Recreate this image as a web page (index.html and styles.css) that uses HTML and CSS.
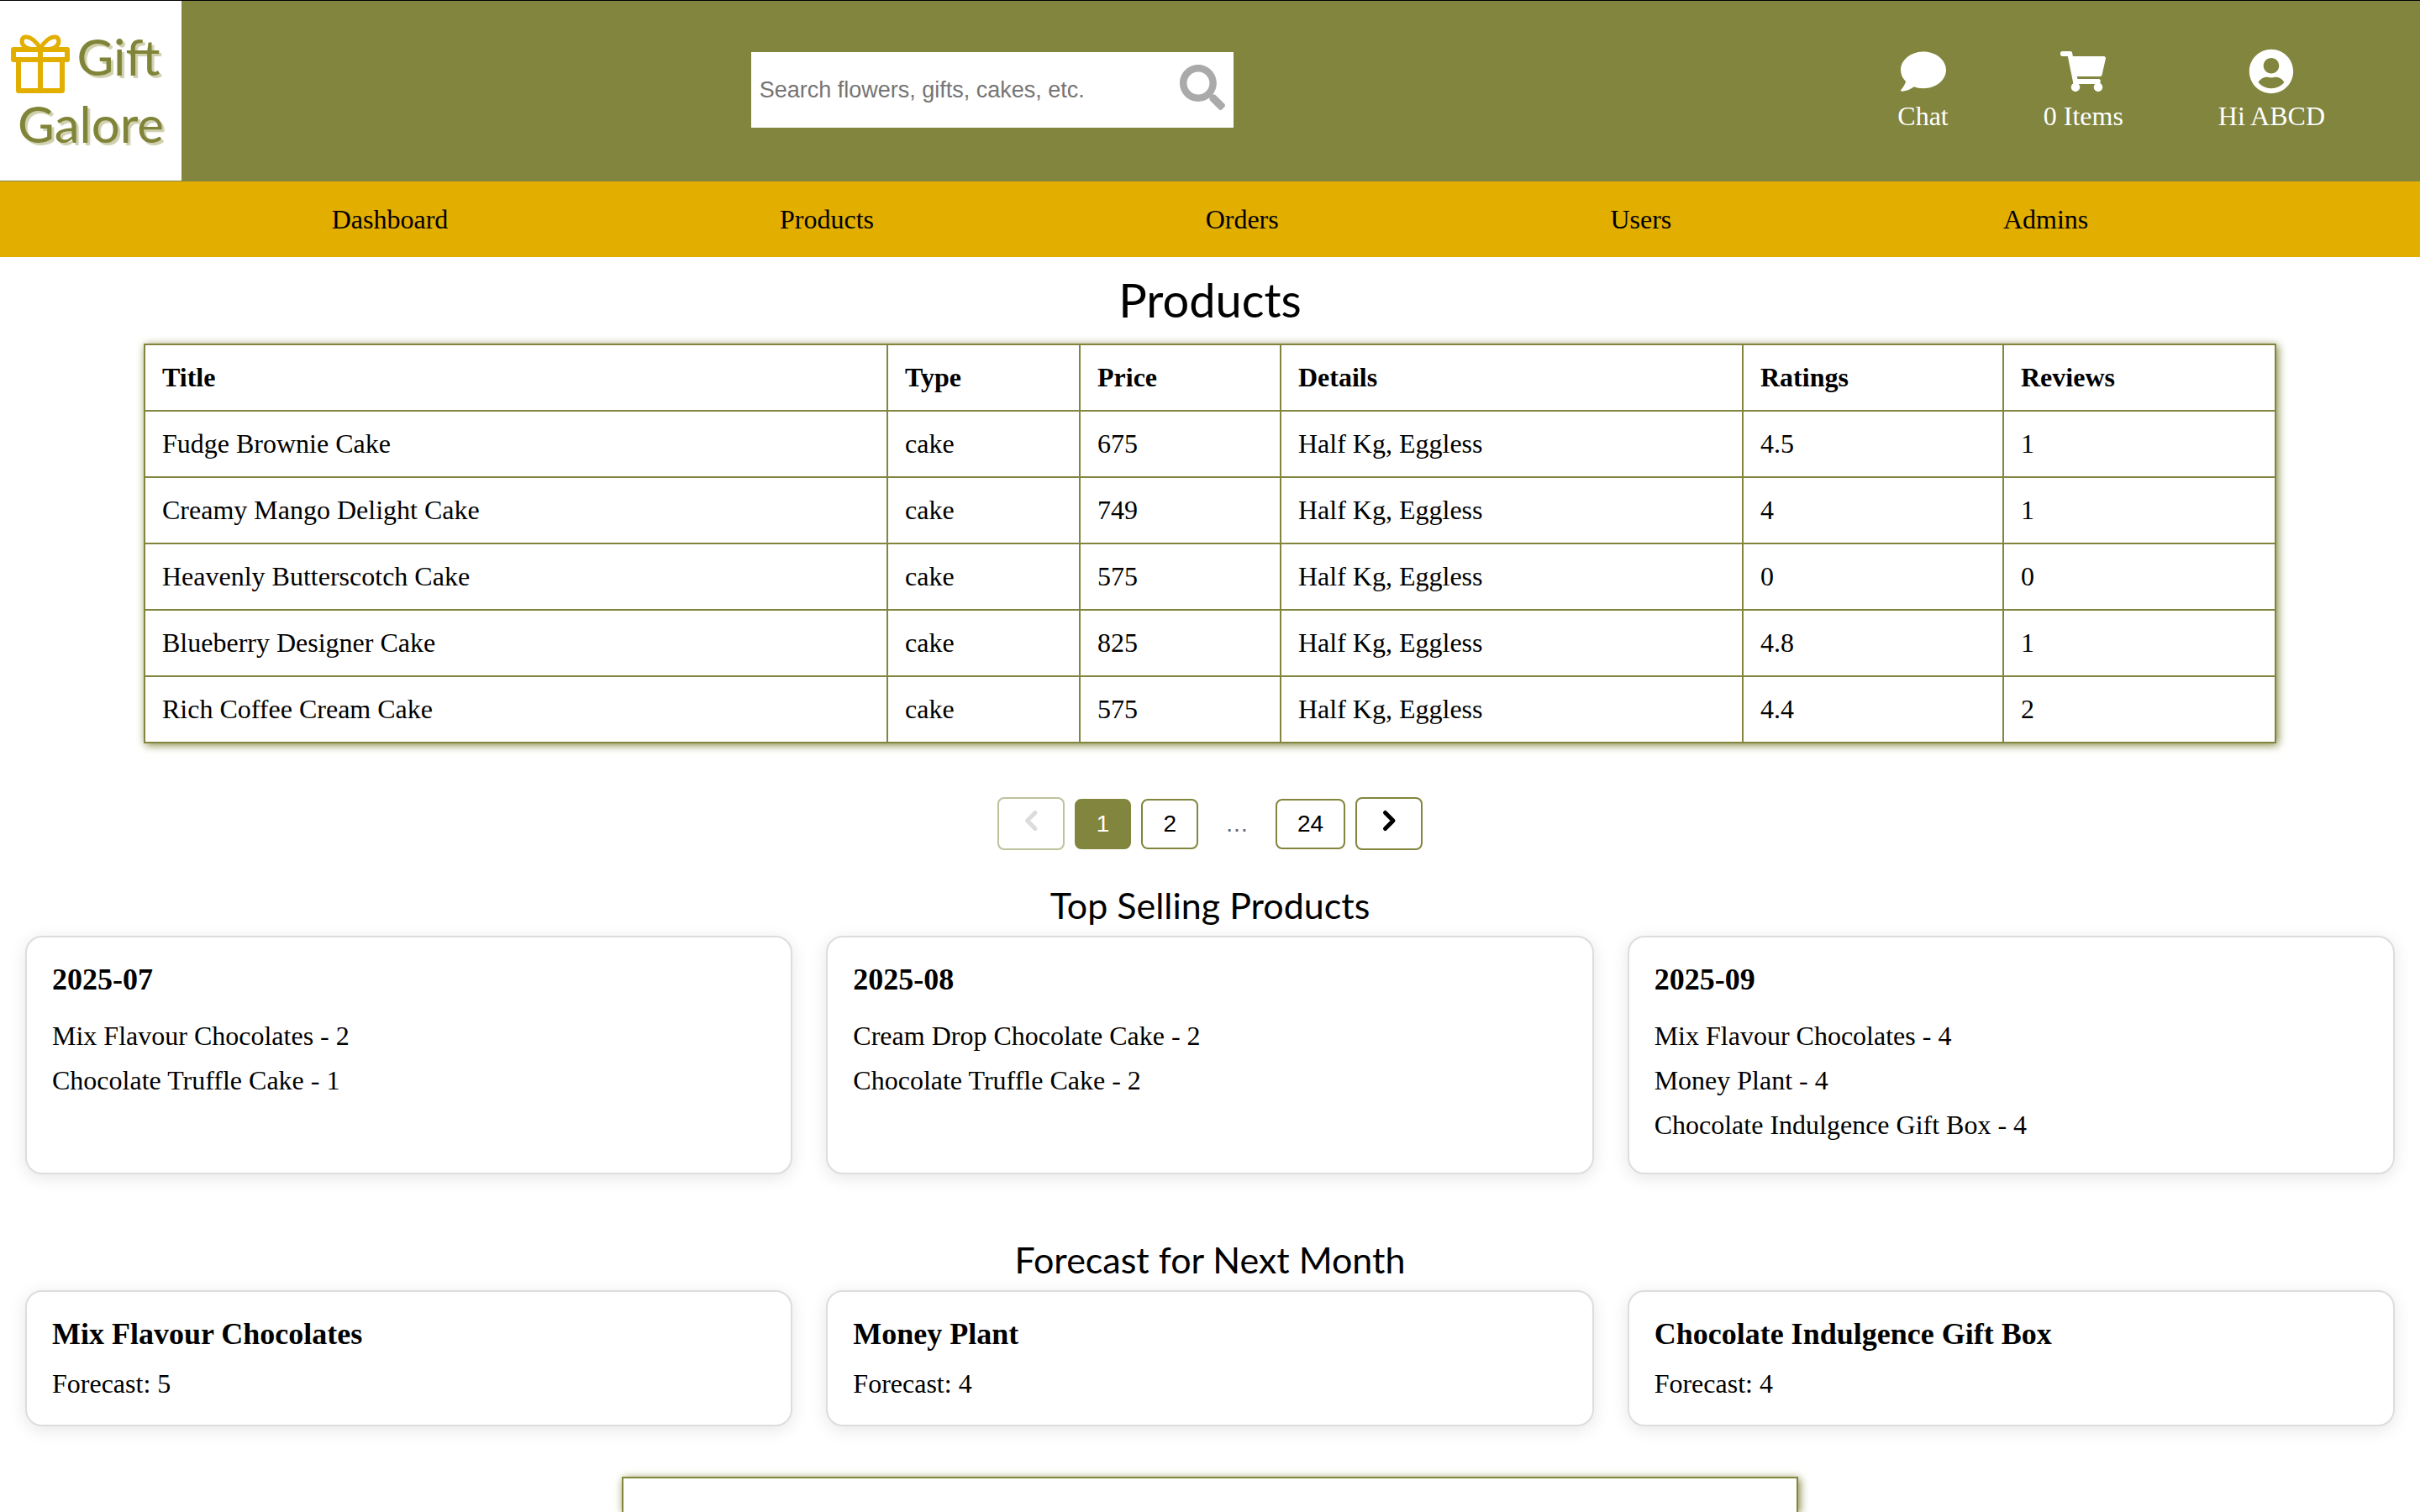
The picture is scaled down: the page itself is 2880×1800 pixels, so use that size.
FILE: index.html
```html
<!DOCTYPE html>
<html lang="en">
<head>
<meta charset="utf-8">
<title>Gift Galore - Products</title>
<link rel="stylesheet" href="styles.css">
</head>
<body>
<header class="header">
  <a class="logo" href="#">
    <span class="logo-row">
      <svg class="logo-gift" viewBox="0 0 70 70" fill="none" stroke="currentColor" stroke-width="6" stroke-linejoin="round" aria-hidden="true">
        <path d="M3 18H67V30H3ZM9 30V67H61V30M35 18V67"/>
        <path stroke-width="5" d="M35 17C31 9 23 2 17 3C12 4 12 11 16 14C19 17 26 18 33 18M35 17C39 9 47 2 53 3C58 4 58 11 54 14C51 17 44 18 37 18"/>
      </svg>
      <span>Gift</span>
    </span>
    <span>Galore</span>
  </a>
  <form class="search" role="search">
    <input class="search-input" type="search" aria-label="Search" placeholder="Search flowers, gifts, cakes, etc.">
    <button class="search-button" type="button" aria-label="Search">
      <svg class="icon" viewBox="0 0 512 512" fill="currentColor"><path d="M505 442.700L405.300 343c-4.500-4.500-10.600-7-17-7H372c27.600-35.300 44-79.700 44-128C416 93.100 322.900 0 208 0S0 93.100 0 208s93.100 208 208 208c48.300 0 92.700-16.400 128-44v16.300c0 6.400 2.500 12.500 7 17l99.700 99.700c9.400 9.400 24.600 9.400 33.900 0l28.300-28.300c9.400-9.400 9.400-24.600.1-34zM208 336c-70.700 0-128-57.200-128-128 0-70.700 57.200-128 128-128 70.700 0 128 57.200 128 128 0 70.700-57.200 128-128 128z"/></svg>
    </button>
  </form>
  <div class="actions">
    <a class="action" href="#">
      <svg class="icon" viewBox="0 0 512 512" fill="currentColor" aria-hidden="true"><path d="M256 32C114.600 32 0 125.100 0 240c0 49.600 21.400 95 57 130.700C44.500 421.100 2.700 466 2.200 466.500c-2.200 2.300-2.800 5.700-1.500 8.700S4.800 480 8 480c66.300 0 116-31.800 140.600-51.400 32.700 12.300 69 19.400 107.400 19.400 141.400 0 256-93.100 256-208S397.400 32 256 32z"/></svg>
      <span>Chat</span>
    </a>
    <a class="action" href="#">
      <svg class="icon" viewBox="0 0 576 512" fill="currentColor" aria-hidden="true"><path d="M528.120 301.319l47.273-208C578.806 78.301 567.391 64 551.990 64H159.208l-9.166-44.810C147.758 8.021 137.930 0 126.529 0H24C10.745 0 0 10.745 0 24v16c0 13.255 10.745 24 24 24h69.883l70.248 343.435C147.325 417.100 136 435.222 136 456c0 30.928 25.072 56 56 56s56-25.072 56-56c0-15.674-6.447-29.835-16.824-40h209.647C430.447 426.165 424 440.326 424 456c0 30.928 25.072 56 56 56s56-25.072 56-56c0-22.172-12.888-41.332-31.579-50.405l5.517-24.276c3.413-15.018-8.002-29.319-23.403-29.319H218.117l-6.545-32h293.145c11.206 0 20.920-7.754 23.403-18.681z"/></svg>
      <span>0 Items</span>
    </a>
    <a class="action" href="#">
      <svg class="icon" viewBox="0 0 496 512" fill="currentColor" aria-hidden="true"><path d="M248 8C111 8 0 119 0 256s111 248 248 248 248-111 248-248S385 8 248 8zm0 96c48.600 0 88 39.400 88 88s-39.400 88-88 88-88-39.400-88-88 39.400-88 88-88zm0 344c-58.700 0-111.300-26.600-146.500-68.200 18.800-35.400 55.600-59.800 98.500-59.800 2.400 0 4.800.4 7.100 1.100 13 4.200 26.600 6.900 40.900 6.900 14.300 0 28-2.700 40.900-6.900 2.300-.7 4.700-1.100 7.100-1.100 42.900 0 79.700 24.400 98.500 59.800C359.300 421.400 306.700 448 248 448z"/></svg>
      <span>Hi ABCD</span>
    </a>
  </div>
</header>
<nav class="nav">
  <a href="#">Dashboard</a>
  <a href="#">Products</a>
  <a href="#">Orders</a>
  <a href="#">Users</a>
  <a href="#">Admins</a>
</nav>
<main class="main">
  <h1 class="title">Products</h1>
  <table class="products">
    <colgroup>
      <col class="col-title"><col class="col-type"><col class="col-price"><col class="col-details"><col class="col-ratings"><col>
    </colgroup>
    <thead>
      <tr><th>Title</th><th>Type</th><th>Price</th><th>Details</th><th>Ratings</th><th>Reviews</th></tr>
    </thead>
    <tbody>
      <tr><td>Fudge Brownie Cake</td><td>cake</td><td>675</td><td>Half Kg, Eggless</td><td>4.5</td><td>1</td></tr>
      <tr><td>Creamy Mango Delight Cake</td><td>cake</td><td>749</td><td>Half Kg, Eggless</td><td>4</td><td>1</td></tr>
      <tr><td>Heavenly Butterscotch Cake</td><td>cake</td><td>575</td><td>Half Kg, Eggless</td><td>0</td><td>0</td></tr>
      <tr><td>Blueberry Designer Cake</td><td>cake</td><td>825</td><td>Half Kg, Eggless</td><td>4.8</td><td>1</td></tr>
      <tr><td>Rich Coffee Cream Cake</td><td>cake</td><td>575</td><td>Half Kg, Eggless</td><td>4.4</td><td>2</td></tr>
    </tbody>
  </table>
  <div class="pagination">
    <button class="page page-arrow" type="button" aria-label="Previous page" disabled>
      <svg class="chevron" viewBox="0 0 28 28"><path d="M19 4.500L9.500 14L19 23.500"/></svg>
    </button>
    <button class="page page-current" type="button">1</button>
    <button class="page" type="button">2</button>
    <span class="page-dots">…</span>
    <button class="page" type="button">24</button>
    <button class="page page-arrow" type="button" aria-label="Next page">
      <svg class="chevron" viewBox="0 0 28 28"><path d="M9.500 4.500L19 14L9.500 23.500"/></svg>
    </button>
  </div>
  <section class="section">
    <h2 class="subtitle">Top Selling Products</h2>
    <div class="cards">
      <article class="card">
        <h3>2025-07</h3>
        <ul><li>Mix Flavour Chocolates - 2</li><li>Chocolate Truffle Cake - 1</li></ul>
      </article>
      <article class="card">
        <h3>2025-08</h3>
        <ul><li>Cream Drop Chocolate Cake - 2</li><li>Chocolate Truffle Cake - 2</li></ul>
      </article>
      <article class="card">
        <h3>2025-09</h3>
        <ul><li>Mix Flavour Chocolates - 4</li><li>Money Plant - 4</li><li>Chocolate Indulgence Gift Box - 4</li></ul>
      </article>
    </div>
  </section>
  <section class="section">
    <h2 class="subtitle">Forecast for Next Month</h2>
    <div class="cards">
      <article class="card"><h3>Mix Flavour Chocolates</h3><p>Forecast: 5</p></article>
      <article class="card"><h3>Money Plant</h3><p>Forecast: 4</p></article>
      <article class="card"><h3>Chocolate Indulgence Gift Box</h3><p>Forecast: 4</p></article>
    </div>
  </section>
  <section class="chart"></section>
</main>
</body>
</html>
```
FILE: styles.css
```css
:root {
  --olive: #82853d;
  --gold: #e2ae00;
  --script: Lato, sans-serif;
}

* { box-sizing: border-box; margin: 0; padding: 0; }

body {
  display: flex;
  flex-direction: column;
  min-height: 100vh;
  border-top: 1px solid #000;
  background: #fff;
  color: #000;
  font: 32px/37px "Liberation Serif", "Times New Roman", serif;
}

a { color: inherit; text-decoration: none; }
button { font: inherit; cursor: pointer; }
ul { list-style: none; }
.icon { display: block; width: 54px; height: 54px; }

/* Header */
.header {
  display: flex;
  align-items: center;
  background: var(--olive);
  padding-bottom: 1px;
}

.logo {
  display: flex;
  flex-direction: column;
  align-items: center;
  width: 216px;
  height: 214px;
  padding-top: 30px;
  background: #fff;
  color: #808438;
  font: 60px/73px var(--script);
  text-shadow: 3px 3px 1px #cfcfae;
}
.logo-row { display: flex; gap: 8px; padding-right: 12px; }
.logo-gift { width: 70px; height: 70px; margin-top: 10px; color: var(--gold); }

.search {
  display: flex;
  align-items: center;
  width: 574px;
  height: 90px;
  margin: 0 auto 2px;
  padding: 0 10px;
  background: #fff;
}
.search-input {
  flex: 1;
  min-width: 0;
  border: 0;
  outline: 0;
  background: none;
  font: 27px/32px "Liberation Sans", Arial, sans-serif;
}
.search-input::placeholder { color: #757575; opacity: 1; }
.search-button { padding-bottom: 6px; border: 0; background: none; color: #aaa; }

.actions { display: flex; gap: 113px; padding: 0 113px 2px; color: #fff; }
.action { display: flex; flex-direction: column; align-items: center; gap: 8px; }

.nav {
  display: flex;
  justify-content: space-evenly;
  align-items: center;
  height: 90px;
  background: var(--gold);
}

/* Products table */
.main { flex: 1; display: flex; flex-direction: column; }

.title, .subtitle { font-family: var(--script); font-weight: 400; text-align: center; }
.title { padding: 11px 0 12px; font-size: 56px; line-height: 80px; }
.subtitle { padding-bottom: 8px; font-size: 43px; line-height: 56px; }

.products {
  width: calc(100% - 342px);
  margin: 0 auto;
  border-collapse: collapse;
  table-layout: fixed;
  box-shadow: 2px 2px 10px var(--olive);
}
.products th, .products td { padding: 20px; border: 2px solid var(--olive); text-align: left; }
.col-title { width: 884px; }
.col-type { width: 229px; }
.col-price { width: 239px; }
.col-details { width: 550px; }
.col-ratings { width: 310px; }

/* Pagination */
.pagination {
  display: flex;
  justify-content: center;
  align-items: center;
  gap: 12px;
  margin: 64px 0 38px;
  font: 28px/32px "Liberation Sans", Arial, sans-serif;
}
.page {
  padding: 12px 24px;
  border: 2px solid var(--olive);
  border-radius: 8px;
  background: #fff;
  color: #000;
}
.page-current { background: var(--olive); color: #fff; }
.page-arrow { padding-bottom: 19px; }
.page-arrow:disabled { color: #bbb; opacity: 0.5; }
.page-dots { padding: 0 20px; color: #666; }
.chevron {
  display: block;
  width: 28px;
  height: 28px;
  fill: none;
  stroke: currentColor;
  stroke-width: 5;
  stroke-linecap: round;
  stroke-linejoin: round;
}

/* Cards */
.section { padding: 0 30px; margin-bottom: 60px; }
.section + .section { margin-top: 14px; }
.cards { display: grid; grid-template-columns: repeat(3, 1fr); gap: 40px; }
.card {
  padding: 30px;
  border: 2px solid #ddd;
  border-radius: 20px;
  background: #fff;
  box-shadow: 0 4px 20px rgba(0, 0, 0, 0.1);
}
.card h3 { margin-bottom: 20px; font-size: 36px; line-height: 41px; }
.card li { padding: 8px 0; }

.chart {
  flex: 1;
  width: 1400px;
  max-width: 100%;
  margin: 0 auto;
  border: 2px solid var(--olive);
  border-bottom: 0;
  box-shadow: 2px 2px 10px var(--olive);
}
```
